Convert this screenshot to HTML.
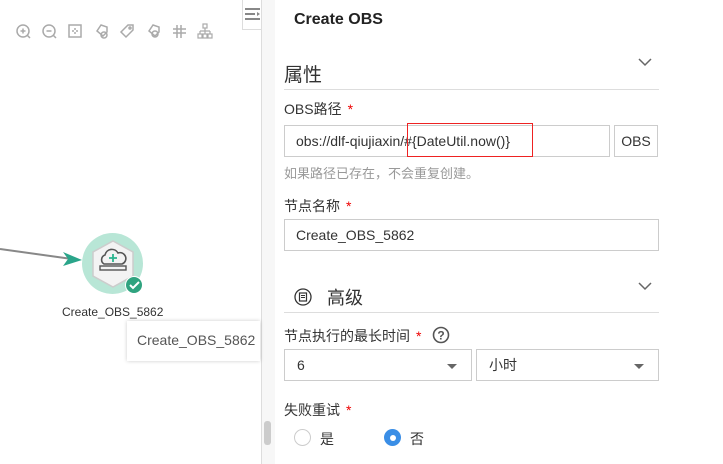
<!DOCTYPE html>
<html><head><meta charset="utf-8"><style>
*{box-sizing:border-box;margin:0;padding:0}
body{width:723px;height:464px;overflow:hidden;background:#fff;font-family:"Liberation Sans","Noto Sans CJK SC",sans-serif;position:relative;color:#333}
.a{position:absolute}
.lbl{font-size:14px;color:#333}
.star{color:#e00;margin-left:6px}
.inp{border:1px solid #ccc;background:#fff;font-size:14px;color:#333;display:flex;align-items:center}
.caret{width:0;height:0;border-left:5px solid transparent;border-right:5px solid transparent;border-top:5px solid #666;position:absolute;right:14px;top:14px}
</style></head><body>
<!-- toolbar icons -->
<svg class="a" style="left:14px;top:22px" width="210" height="20" fill="none" stroke="#aaa" stroke-width="1.5">
<circle cx="9" cy="9" r="6"/><path d="M13 13l3 3M6.5 9h5M9 6.5v5"/>
<g transform="translate(26 0)"><circle cx="9" cy="9" r="6"/><path d="M13 13l3 3M6.5 9h5"/></g>
<g transform="translate(52 0)"><rect x="3" y="3" width="12" height="12"/><path d="M9 6v2M9 10v2M6 9h2M10 9h2"/></g>
<g transform="translate(78 0)"><path d="M9 3l6 2v5l-4 4-6-5z"/><circle cx="12" cy="13" r="3"/></g>
<g transform="translate(104 0)"><path d="M10 3h5v5l-7 7-5-5z"/><circle cx="12" cy="6" r="1"/></g>
<g transform="translate(130 0)"><path d="M9 3l6 2v5l-4 4-6-5z"/><circle cx="11" cy="12" r="3"/></g>
<g transform="translate(156 0)"><path d="M7 3v13M11 3v13M3 7h13M3 11h13"/></g>
<g transform="translate(182 0)" stroke-width="1.2"><rect x="7" y="2" width="4" height="4"/><path d="M9 6v3M4 9h10M4 9v3M9 9v3M14 9v3"/><rect x="2" y="12" width="4" height="4"/><rect x="7" y="12" width="4" height="4"/><rect x="12" y="12" width="4" height="4"/></g>
</svg>
<!-- toggle -->
<div class="a" style="left:242px;top:0;width:20px;height:30px;border:1px solid #ddd;border-top:none;background:#fff"></div>
<svg class="a" style="left:245px;top:7px" width="16" height="14" stroke="#888" stroke-width="2"><path d="M0 2h15M0 7h10M0 12h15"/><path d="M12 5l3 2-3 2z" fill="#888" stroke="none"/></svg>
<!-- divider strip -->
<div class="a" style="left:261px;top:0;width:1px;height:464px;background:#ddd"></div>
<div class="a" style="left:262px;top:0;width:13px;height:464px;background:#f7f7f7"></div>
<div class="a" style="left:264px;top:421px;width:7px;height:24px;background:#ccc;border-radius:3px"></div>
<!-- edge arrow -->
<svg class="a" style="left:0;top:240px" width="90" height="30"><path d="M0 9L72 19" stroke="#888" stroke-width="2"/><path d="M63 12L82 20L63 26L68 19z" fill="#2aa58a"/></svg>
<!-- node -->
<div class="a" style="left:82px;top:233px;width:61px;height:61px;border-radius:50%;background:#b8e6d6"></div>
<svg class="a" style="left:86px;top:237px" width="54" height="54"><polygon points="27,4 47,15 47,39 27,50 7,39 7,15" fill="#f3f3f3" stroke="#ccc" stroke-width="1.5"/>
<path d="M18 27a5 5 0 0 1 1-9a7 7 0 0 1 13-2a5 5 0 0 1 4 11z" fill="none" stroke="#555" stroke-width="1.6"/><path d="M27 17v8M23 21h8" stroke="#2bb58f" stroke-width="1.8"/><rect x="14" y="29" width="26" height="4" fill="none" stroke="#555" stroke-width="1.4"/></svg>
<div class="a" style="left:125px;top:276px;width:18px;height:18px;border-radius:50%;background:#2fa37f;border:1.5px solid #fff"></div>
<svg class="a" style="left:129px;top:281px" width="11" height="9"><path d="M1 4l3 3 6-6" stroke="#fff" stroke-width="2" fill="none"/></svg>
<div class="a" style="left:62px;top:305px;font-size:12px;color:#333">Create_OBS_5862</div>
<div class="a" style="left:127px;top:321px;width:133px;height:40px;background:#fff;box-shadow:0 0 4px rgba(0,0,0,.2);font-size:14px;color:#555;padding:11px 10px">Create_OBS_5862</div>
<!-- right panel -->
<div class="a" style="left:294px;top:11px;font-size:16px;font-weight:bold;color:#222">Create OBS</div>
<div class="a" style="left:284px;top:60px;font-size:19px;color:#333">属性</div>
<svg class="a" style="left:638px;top:58px" width="14" height="9"><path d="M1 1l6 6 6-6" stroke="#666" stroke-width="1.5" fill="none"/></svg>
<div class="a" style="left:284px;top:89px;width:375px;height:1px;background:#ddd"></div>
<div class="a lbl" style="left:284px;top:99px">OBS路径<span class="star">*</span></div>
<div class="a inp" style="left:284px;top:125px;width:326px;height:32px;padding-left:11px">obs://dlf-qiujiaxin/#{DateUtil.now()}</div>
<div class="a" style="left:407px;top:123px;width:126px;height:34px;border:1px solid #e22"></div>
<div class="a inp" style="left:614px;top:125px;width:44px;height:32px;justify-content:center">OBS</div>
<div class="a" style="left:284px;top:163px;font-size:13px;color:#999">如果路径已存在，不会重复创建。</div>
<div class="a lbl" style="left:284px;top:196px">节点名称<span class="star">*</span></div>
<div class="a inp" style="left:284px;top:219px;width:375px;height:32px;padding-left:11px">Create_OBS_5862</div>
<svg class="a" style="left:293px;top:287px" width="20" height="20"><circle cx="10" cy="10" r="8" fill="none" stroke="#333" stroke-width="1.3"/><rect x="6.5" y="6" width="7" height="8" fill="none" stroke="#333" stroke-width="1.2"/><path d="M8 8.5h4M8 10.5h4" stroke="#333"/></svg>
<div class="a" style="left:327px;top:284px;font-size:18px;color:#333">高级</div>
<svg class="a" style="left:638px;top:282px" width="14" height="9"><path d="M1 1l6 6 6-6" stroke="#666" stroke-width="1.5" fill="none"/></svg>
<div class="a" style="left:284px;top:312px;width:375px;height:1px;background:#ddd"></div>
<div class="a lbl" style="left:284px;top:326px">节点执行的最长时间<span class="star">*</span></div>
<svg class="a" style="left:432px;top:326px" width="18" height="18"><circle cx="9" cy="9" r="7.5" fill="none" stroke="#555" stroke-width="1.6"/><text x="9" y="13.5" font-size="12" font-weight="bold" fill="#555" text-anchor="middle" font-family="Liberation Sans">?</text></svg>
<div class="a inp" style="left:284px;top:349px;width:188px;height:32px;padding-left:12px">6<span class="caret"></span></div>
<div class="a inp" style="left:476px;top:349px;width:183px;height:32px;padding-left:12px">小时<span class="caret"></span></div>
<div class="a lbl" style="left:284px;top:400px">失败重试<span class="star">*</span></div>
<div class="a" style="left:294px;top:429px;width:17px;height:17px;border-radius:50%;border:1px solid #ccc"></div>
<div class="a lbl" style="left:320px;top:429px">是</div>
<div class="a" style="left:384px;top:429px;width:17px;height:17px;border-radius:50%;background:#3a8ee6;display:flex;align-items:center;justify-content:center"><div style="width:6px;height:6px;border-radius:50%;background:#fff"></div></div>
<div class="a lbl" style="left:410px;top:429px">否</div>
</body></html>
